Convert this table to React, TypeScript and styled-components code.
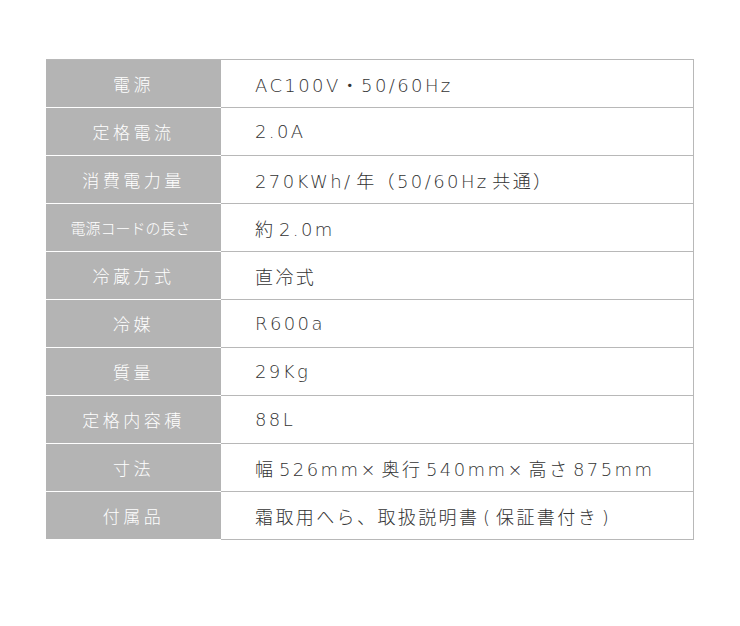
import React from "react";
import styled, { createGlobalStyle } from "styled-components";

type Spec = { label: string; value: string; tight?: boolean };

const specs: Spec[] = [
  { label: "電源", value: "AC100V・50/60Hz" },
  { label: "定格電流", value: "2.0A" },
  { label: "消費電力量", value: "270KWh/ 年（50/60Hz 共通）" },
  { label: "電源コードの長さ", value: "約 2.0m", tight: true },
  { label: "冷蔵方式", value: "直冷式" },
  { label: "冷媒", value: "R600a" },
  { label: "質量", value: "29Kg" },
  { label: "定格内容積", value: "88L" },
  { label: "寸法", value: "幅 526mm× 奥行 540mm× 高さ 875mm" },
  { label: "付属品", value: "霜取用へら、取扱説明書 ( 保証書付き )" },
];

const GlobalStyle = createGlobalStyle`
  body {
    margin: 0;
    background: #ffffff;
    font-family: "Noto Sans CJK JP", "Noto Sans", sans-serif;
  }
`;

export default function App() {
  return (
    <>
      <GlobalStyle />
      <Page>
        <Table>
          {specs.map((s) => (
            <Row key={s.label}>
              <Label $tight={s.tight}>{s.label}</Label>
              <Value>{s.value}</Value>
            </Row>
          ))}
        </Table>
      </Page>
    </>
  );
}

const Page = styled.div`
  width: 740px;
  height: 626px;
  padding: 59px 46px 0;
  box-sizing: border-box;
`;

const Table = styled.div`
  width: 648px;
  display: flex;
  flex-direction: column;
  border-top: 1px solid #b8b8b8;
`;

// 한 줄: 회색 라벨 + 흰 값
const Row = styled.div`
  display: grid;
  grid-template-columns: 175px 1fr;
  height: 48px;
`;

const Label = styled.div<{ $tight?: boolean }>`
  display: flex;
  align-items: center;
  justify-content: center;
  background: #b4b4b4;
  color: #ffffff;
  border-bottom: 1px solid #ffffff;
  font-size: ${({ $tight }) => ($tight ? "15px" : "17px")};
  letter-spacing: ${({ $tight }) => ($tight ? "0" : "3.5px")};
  padding-right: ${({ $tight }) => ($tight ? "6px" : "0")};
  font-weight: 300;
`;

// 값: 라틴은 넓은 글꼴, 일본어는 Noto CJK
const Value = styled.div`
  display: flex;
  align-items: center;
  padding-left: 34px;
  color: #333333;
  border-bottom: 1px solid #b8b8b8;
  border-right: 1px solid #b8b8b8;
  font-family: "DejaVu Sans", "Noto Sans CJK JP", sans-serif;
  font-size: 18px;
  letter-spacing: 2.4px;
  word-spacing: -4.5px;
  font-weight: 200;
`;
